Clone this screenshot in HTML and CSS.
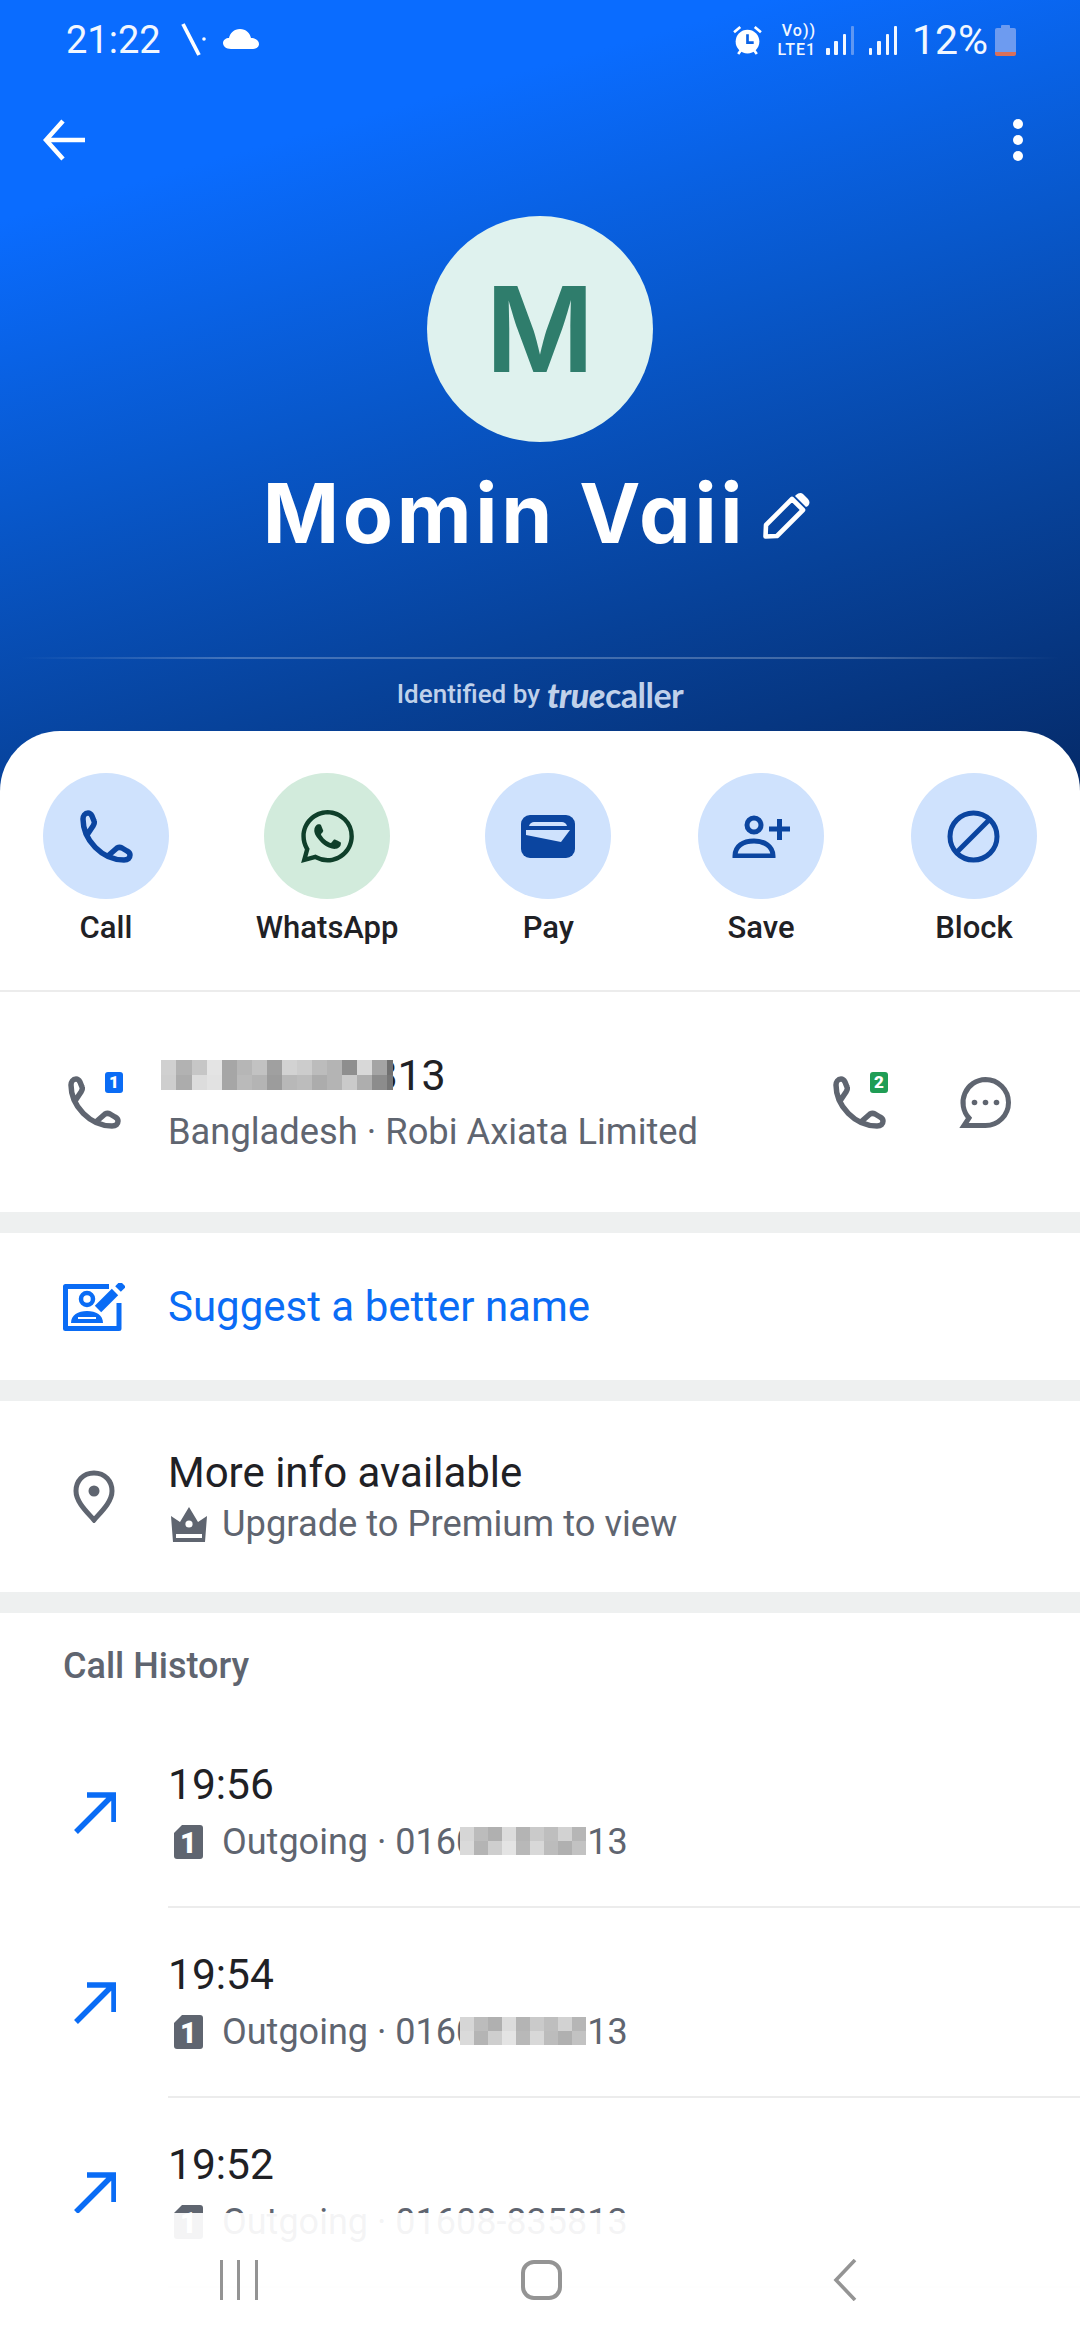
FILE: index.html
```html
<!DOCTYPE html>
<html lang="en">
<head>
<meta charset="utf-8">
<title>Momin Vaii</title>
<link rel="stylesheet" href="styles.css">
</head>
<body>
<svg class="defs" width="0" height="0" aria-hidden="true">
  <symbol id="handset" viewBox="0 0 53 53">
    <path d="M3 9C3 30 22 50 44 50C48 50 50 48 50 45C50 43 49 42 47 41L42 38C40 37 39 37 37 38L29 45M3 9C3 6 5 3 8 3C10 3 11 4 12 6L14 11C15 13 14 14 13 16L7 25" fill="none" stroke="currentColor" stroke-width="5.5" stroke-linejoin="round" stroke-linecap="round"/>
  </symbol>
  <symbol id="out" viewBox="0 0 42 42">
    <path d="M2 40L38 4M13 3H40V30" fill="none" stroke="#0a6cf5" stroke-width="5.500"/>
  </symbol>
  <symbol id="mosaic-a" viewBox="0 0 232 30">
    <rect width="232" height="30" fill="#c4c4c4"/>
    <rect x="0" width="15" height="15" fill="#d0d0d0"/><rect x="15" width="16" height="15" fill="#b2b2b2"/><rect x="31" width="15" height="15" fill="#c6c6c6"/><rect x="46" width="15" height="15" fill="#e4e4e4"/><rect x="61" width="15" height="15" fill="#a6a6a6"/><rect x="76" width="15" height="15" fill="#b6b6b6"/><rect x="91" width="15" height="15" fill="#c2c2c2"/><rect x="106" width="15" height="15" fill="#a0a0a0"/><rect x="121" width="15" height="15" fill="#d2d2d2"/><rect x="136" width="15" height="15" fill="#cccccc"/><rect x="151" width="15" height="15" fill="#bcbcbc"/><rect x="166" width="15" height="15" fill="#b4b4b4"/><rect x="181" width="15" height="15" fill="#8e8e8e"/><rect x="196" width="15" height="15" fill="#d8d8d8"/><rect x="211" width="15" height="15" fill="#a4a4a4"/><rect x="226" width="6" height="15" fill="#707070"/>
    <rect x="0" y="15" width="15" height="15" fill="#cecece"/><rect x="15" y="15" width="16" height="15" fill="#acacac"/><rect x="31" y="15" width="15" height="15" fill="#dcdcdc"/><rect x="46" y="15" width="15" height="15" fill="#e2e2e2"/><rect x="61" y="15" width="15" height="15" fill="#a6a6a6"/><rect x="76" y="15" width="15" height="15" fill="#bababa"/><rect x="91" y="15" width="15" height="15" fill="#b4b4b4"/><rect x="106" y="15" width="15" height="15" fill="#9c9c9c"/><rect x="121" y="15" width="15" height="15" fill="#b8b8b8"/><rect x="136" y="15" width="15" height="15" fill="#bcbcbc"/><rect x="151" y="15" width="15" height="15" fill="#acacac"/><rect x="166" y="15" width="15" height="15" fill="#b4b4b4"/><rect x="181" y="15" width="15" height="15" fill="#cacaca"/><rect x="196" y="15" width="15" height="15" fill="#aeaeae"/><rect x="211" y="15" width="15" height="15" fill="#8c8c8c"/><rect x="226" y="15" width="6" height="15" fill="#767676"/>
  </symbol>
  <symbol id="mosaic-b" viewBox="0 0 126 28">
    <rect width="126" height="28" fill="#c8c8c8"/>
    <rect x="0" width="14" height="14" fill="#d6d6d6"/><rect x="14" width="14" height="14" fill="#bcbcbc"/><rect x="28" width="14" height="14" fill="#b0b0b0"/><rect x="42" width="14" height="14" fill="#dcdcdc"/><rect x="56" width="14" height="14" fill="#b4b4b4"/><rect x="70" width="14" height="14" fill="#cacaca"/><rect x="84" width="14" height="14" fill="#bebebe"/><rect x="98" width="14" height="14" fill="#d2d2d2"/><rect x="112" width="14" height="14" fill="#b6b6b6"/>
    <rect x="0" y="14" width="14" height="14" fill="#dadada"/><rect x="14" y="14" width="14" height="14" fill="#b4b4b4"/><rect x="28" y="14" width="14" height="14" fill="#cecece"/><rect x="42" y="14" width="14" height="14" fill="#e4e4e4"/><rect x="56" y="14" width="14" height="14" fill="#b8b8b8"/><rect x="70" y="14" width="14" height="14" fill="#d8d8d8"/><rect x="84" y="14" width="14" height="14" fill="#bcbcbc"/><rect x="98" y="14" width="14" height="14" fill="#b0b0b0"/><rect x="112" y="14" width="14" height="14" fill="#c2c2c2"/>
  </symbol>
</svg>

<div class="page">
  <header class="hero">
    <div class="status">
      <div class="status-left">
        <span class="clock">21:22</span>
        <svg class="ic-missed" viewBox="0 0 26 34"><path d="M3 1L19 32" stroke="#fff" stroke-width="3.800" fill="none"/><circle cx="24" cy="16" r="1.800" fill="#fff"/></svg>
        <svg class="ic-cloud" viewBox="0 0 36 20"><path d="M8 20C3 20 0 17 0 14C0 11 3 9 6 9C7 4 11 0 17 0C23 0 27 4 28 9C32 9 36 11 36 15C36 18 33 20 30 20Z" fill="#fff"/></svg>
      </div>
      <div class="status-right">
        <svg class="ic-alarm" viewBox="0 0 28 30"><path d="M1 7L7 2M27 7L21 2M5 28L8 24M23 28L20 24" stroke="#fff" stroke-width="2.600" fill="none"/><circle cx="14" cy="16" r="11.500" fill="#fff"/><path d="M14 9V17H20" stroke="#0a62e6" stroke-width="2.600" fill="none"/></svg>
        <div class="volte"><span class="volte-line">Vo))</span><span class="volte-line">LTE1</span></div>
        <div class="signal"><i class="b1"></i><i class="b2"></i><i class="b3"></i><i class="b4 dim"></i></div>
        <div class="signal"><i class="b1"></i><i class="b2"></i><i class="b3"></i><i class="b4"></i></div>
        <span class="pct">12%</span>
        <div class="battery"><span class="battery-cap"></span><span class="battery-body"></span></div>
      </div>
    </div>

    <nav class="topnav">
      <svg class="ic-back" viewBox="0 0 42 42"><path d="M42 21H4M20 2L3 21L20 40" stroke="#fff" stroke-width="4.500" fill="none"/></svg>
      <div class="dots"><i></i><i></i><i></i></div>
    </nav>

    <div class="avatar">M</div>

    <div class="name-row">
      <h1 class="name">Momin Vaii</h1>
      <svg class="ic-pencil" viewBox="0 0 48 48"><path d="M2.500 45.500L3 34L29 8L40 19L14 45Z" fill="none" stroke="#fff" stroke-width="4.600" stroke-linejoin="round"/><path d="M33 4C35 2 38 1 40 3L45 8C47 10 47 13 45 15L43 16L32 5Z" fill="#fff"/></svg>
    </div>

    <div class="hero-line"></div>
    <div class="identified">Identified by <span class="tc"><em>true</em>caller</span></div>
  </header>

  <main class="sheet">
    <section class="actions">
      <div class="action">
        <div class="action-circle"><svg class="ic-53 navy"><use href="#handset"/></svg></div>
        <span>Call</span>
      </div>
      <div class="action">
        <div class="action-circle green">
          <svg class="ic-53" viewBox="0 0 24 24"><path fill="#0f3f2a" d="M17.472 14.382c-.297-.149-1.758-.867-2.03-.967-.273-.099-.471-.148-.67.15-.197.297-.767.966-.94 1.164-.173.199-.347.223-.644.075-.297-.15-1.255-.463-2.39-1.475-.883-.788-1.48-1.761-1.653-2.059-.173-.297-.018-.458.13-.606.134-.133.298-.347.446-.52.149-.174.198-.298.298-.497.099-.198.05-.371-.025-.52-.075-.149-.669-1.612-.916-2.207-.242-.579-.487-.5-.669-.51-.173-.008-.371-.01-.57-.01-.198 0-.52.074-.792.372-.272.297-1.04 1.016-1.04 2.479 0 1.462 1.065 2.875 1.213 3.074.149.198 2.096 3.2 5.077 4.487.709.306 1.262.489 1.694.625.712.227 1.36.195 1.871.118.571-.085 1.758-.719 2.006-1.413.248-.694.248-1.289.173-1.413-.074-.124-.272-.198-.57-.347m-5.421 7.403h-.004a9.87 9.87 0 01-5.031-1.378l-.361-.214-3.741.982.998-3.648-.235-.374a9.86 9.86 0 01-1.51-5.26c.001-5.45 4.436-9.884 9.888-9.884 2.64 0 5.122 1.03 6.988 2.898a9.825 9.825 0 012.893 6.994c-.003 5.45-4.437 9.884-9.885 9.884m8.413-18.297A11.815 11.815 0 0012.05 0C5.495 0 .16 5.335.157 11.892c0 2.096.547 4.142 1.588 5.945L.057 24l6.305-1.654a11.882 11.882 0 005.683 1.448h.005c6.554 0 11.89-5.335 11.893-11.893a11.821 11.821 0 00-3.48-8.413z"/></svg>
        </div>
        <span>WhatsApp</span>
      </div>
      <div class="action">
        <div class="action-circle"><svg class="ic-pay" viewBox="0 0 54 43"><rect width="54" height="43" rx="9" fill="#0b45a0"/><path d="M8 11C9 8 11 7 13 7H41C43 7 45 8 46 11Z" fill="#cfe2fd"/><path d="M5 15H49L40 27L5 20Z" fill="#cfe2fd"/></svg></div>
        <span>Pay</span>
      </div>
      <div class="action">
        <div class="action-circle"><svg class="ic-save" viewBox="0 0 60 43"><circle cx="23" cy="10" r="7" fill="none" stroke="#0b45a0" stroke-width="5"/><path d="M4 41C4 31 12 26 23 26C33 26 42 31 42 41Z" fill="none" stroke="#0b45a0" stroke-width="5"/><path d="M38 14H59M48.500 4V25" stroke="#0b45a0" stroke-width="5" fill="none"/></svg></div>
        <span>Save</span>
      </div>
      <div class="action">
        <div class="action-circle"><svg class="ic-53" viewBox="0 0 53 53"><circle cx="26.500" cy="26.500" r="23.500" fill="none" stroke="#0b45a0" stroke-width="5"/><path d="M42 10L10 42" stroke="#0b45a0" stroke-width="5"/></svg></div>
        <span>Block</span>
      </div>
    </section>

    <section class="row row-phone">
      <div class="lead">
        <div class="phone-wrap">
          <svg class="ic-53 gray"><use href="#handset"/></svg>
          <span class="badge blue">1</span>
        </div>
      </div>
      <div class="body">
        <div class="title num"><span class="masked">01608-835813<svg class="mosaic-a"><use href="#mosaic-a"/></svg></span></div>
        <div class="sub">Bangladesh · Robi Axiata Limited</div>
      </div>
      <div class="trail">
        <div class="phone-wrap">
          <svg class="ic-53 gray"><use href="#handset"/></svg>
          <span class="badge green">2</span>
        </div>
        <svg class="ic-53" viewBox="0 0 53 53"><path d="M26.500 3.500A23 23 0 1 1 26.500 49.500H5L10 42A23 23 0 0 1 26.500 3.500Z" fill="none" stroke="#5f6570" stroke-width="5"/><circle cx="15.500" cy="26.500" r="2.800" fill="#5f6570"/><circle cx="26.500" cy="26.500" r="2.800" fill="#5f6570"/><circle cx="37.500" cy="26.500" r="2.800" fill="#5f6570"/></svg>
      </div>
    </section>

    <div class="band"></div>

    <section class="row row-suggest">
      <div class="lead">
        <svg class="ic-suggest" viewBox="0 0 62 48"><path d="M46 3.500H2.500V45.500H56V20" fill="none" stroke="#0a6cf5" stroke-width="5" stroke-linejoin="round"/><circle cx="24" cy="16" r="6" fill="none" stroke="#0a6cf5" stroke-width="4.500"/><path d="M8 40C8 32 15 28 24 28C33 28 40 32 40 40Z" fill="#0a6cf5"/><path d="M15 35H33" stroke="#fff" stroke-width="2"/><path d="M35 26L52 9" stroke="#0a6cf5" stroke-width="9"/><path d="M55 6L60 1" stroke="#0a6cf5" stroke-width="8"/></svg>
      </div>
      <div class="body"><div class="title link">Suggest a better name</div></div>
    </section>

    <div class="band"></div>

    <section class="row row-more">
      <div class="lead">
        <svg class="ic-pin" viewBox="0 0 42 53"><path d="M21 3C10 3 3 11 3 21C3 32 14 42 21 50C28 42 39 32 39 21C39 11 32 3 21 3Z" fill="none" stroke="#5f6570" stroke-width="5"/><circle cx="21" cy="21" r="5.500" fill="#5f6570"/></svg>
      </div>
      <div class="body body-more">
        <div class="title tight">More info available</div>
        <div class="sub with-icon">
          <svg class="ic-crown" viewBox="0 0 36 35"><path d="M0 9L9 15L18 0L27 15L36 9L34 35H2Z" fill="#5f6570"/><circle cx="18" cy="17" r="3.600" fill="#fff"/><rect x="5" y="27" width="26" height="4" fill="#fff"/></svg>
          Upgrade to Premium to view
        </div>
      </div>
    </section>

    <div class="band"></div>

    <div class="history-head">Call History</div>

    <section class="call">
      <div class="lead"><svg class="ic-out"><use href="#out"/></svg></div>
      <div class="call-body">
        <div class="title time">19:56</div>
        <div class="sub with-icon"><span class="sim">1</span><span class="masked">Outgoing · 01608-835813<svg class="mosaic-b"><use href="#mosaic-b"/></svg></span></div>
      </div>
    </section>
    <section class="call">
      <div class="lead"><svg class="ic-out"><use href="#out"/></svg></div>
      <div class="call-body">
        <div class="title time">19:54</div>
        <div class="sub with-icon"><span class="sim">1</span><span class="masked">Outgoing · 01608-835813<svg class="mosaic-b"><use href="#mosaic-b"/></svg></span></div>
      </div>
    </section>
    <section class="call">
      <div class="lead"><svg class="ic-out"><use href="#out"/></svg></div>
      <div class="call-body">
        <div class="title time">19:52</div>
        <div class="sub with-icon"><span class="sim">1</span><span>Outgoing · 01608-835813</span></div>
      </div>
    </section>
  </main>

  <footer class="softnav">
    <div class="slot">
      <div class="recents"><i></i><i></i><i></i></div>
    </div>
    <div class="slot"><span class="home"></span></div>
    <div class="slot">
      <svg class="ic-navback" viewBox="0 0 24 42"><path d="M22 1L3 21L22 41" fill="none" stroke="#949494" stroke-width="3.600"/></svg>
    </div>
  </footer>
</div>
</body>
</html>
```

FILE: styles.css
```css
* { box-sizing: border-box; }
html, body { margin: 0; padding: 0; background: #fff; }
body { font-family: Roboto, "Liberation Sans", sans-serif; color: #1f2125; }
.defs { position: absolute; }
.page { position: relative; width: 1080px; height: 2340px; overflow: hidden; background: #fff; }

/* Hero */
.hero {
  height: 791px;
  color: #fff;
  background: linear-gradient(164deg, #0a6cff 0%, #0a6cff 20%, #0858cc 46%, #07429a 72%, #052a68 100%);
}
.status { height: 80px; padding: 0 64px 0 66px; display: flex; justify-content: space-between; align-items: center; }
.status-left, .status-right { display: flex; align-items: center; }
.clock { font-size: 38px; line-height: 40px; color: #f2f7ff; }
.pct { font-size: 41px; line-height: 40px; color: #f2f7ff; }
.ic-missed { width: 26px; height: 34px; margin-left: 19px; }
.ic-cloud { width: 36px; height: 20px; margin-left: 17px; margin-top: -2px; }
.ic-alarm { width: 29px; height: 31px; margin-right: 14px; }
.volte { width: 40px; display: flex; flex-direction: column; align-items: flex-end; font-size: 16px; font-weight: 500; color: #f2f7ff; margin-right: 10px; }
.volte-line { display: block; height: 19px; line-height: 19px; letter-spacing: 1px; }
.signal { display: flex; align-items: flex-end; gap: 4.800px; height: 30px; margin-right: 14.500px; }
.signal i { display: block; width: 3.500px; background: #f2f7ff; border-radius: 1px; }
.signal .b1 { height: 7px; }
.signal .b2 { height: 14px; }
.signal .b3 { height: 21px; }
.signal .b4 { height: 29px; }
.signal .dim { background: #5f97f2; }
.battery { display: flex; flex-direction: column; align-items: center; width: 21px; margin-left: 7px; }
.battery-cap { width: 9px; height: 3px; background: #6d9bf0; border-radius: 1px 1px 0 0; }
.battery-body { width: 21px; height: 28px; background: linear-gradient(#6d9bf0 0, #6d9bf0 84%, #d9705a 84%); border-radius: 2px; }

.topnav { height: 120px; padding: 0 57px 0 43px; display: flex; justify-content: space-between; align-items: center; }
.ic-back { width: 42px; height: 42px; }
.dots { display: flex; flex-direction: column; gap: 6px; }
.dots i { display: block; width: 10px; height: 10px; border-radius: 50%; background: #fff; }

.avatar {
  width: 226px; height: 226px; margin: 16px auto 0; border-radius: 50%;
  background: #dff2ee; color: #2f7d6c;
  display: flex; align-items: center; justify-content: center;
  font-family: Inter, "Open Sans", sans-serif; font-weight: 600; font-size: 118px; line-height: 1;
}
.name-row { display: flex; justify-content: center; align-items: center; gap: 17px; margin-top: 22px; height: 100px; padding-right: 6px; }
.name {
  margin: 0; font-family: Inter, "Open Sans", sans-serif; font-weight: 700; font-size: 82px; line-height: 100px;
  letter-spacing: 3.700px; font-feature-settings: "cv11" 1;
}
.ic-pencil { width: 48px; height: 48px; margin-top: 2px; }
.hero-line { height: 2px; margin: 93px 20px 0; background: linear-gradient(90deg, rgba(255,255,255,0), rgba(255,255,255,.24) 20%, rgba(255,255,255,.24) 80%, rgba(255,255,255,0)); }
.identified { margin-top: 17px; height: 36px; display: flex; justify-content: center; align-items: center; gap: 7px; font-size: 26px; font-weight: 500; color: #c0d1ea; }
.tc { font-size: 34px; font-weight: 700; letter-spacing: -.5px; font-family: Lato, Roboto, sans-serif; }
.tc em { font-style: italic; font-weight: 900; font-family: Lato, serif; }

/* Sheet */
.sheet { position: relative; margin-top: -60px; background: #fff; border-radius: 60px 60px 0 0; }
.actions { display: flex; justify-content: space-between; padding: 42px 43px 0; height: 261px; border-bottom: 2px solid #ececec; }
.action { display: flex; flex-direction: column; align-items: center; gap: 11px; min-width: 126px; font-size: 31px; font-weight: 500; line-height: 36px; color: #1f2125; }
.action-circle { width: 126px; height: 126px; border-radius: 50%; background: #cfe2fd; display: flex; align-items: center; justify-content: center; }
.action-circle.green { background: #d2ebdc; }
.ic-53 { width: 53px; height: 53px; display: block; flex: none; }
.navy { color: #0b45a0; }
.gray { color: #5f6570; }
.ic-pay { width: 54px; height: 43px; }
.ic-save { width: 60px; height: 43px; margin-left: -1px; }

.row { display: flex; align-items: center; }
.row-phone { height: 220px; }
.row-suggest { height: 147px; }
.row-more { height: 191px; }
.lead { width: 168px; flex: none; display: flex; align-items: center; }
.phone-wrap { position: relative; width: 53px; height: 53px; }
.lead > .phone-wrap { margin-left: 68px; }
.body { flex: 1; }
.body-more { padding-top: 2px; }
.trail { display: flex; align-items: center; gap: 73px; margin-right: 68px; }
.badge { position: absolute; top: -4px; right: -2px; width: 18px; height: 21px; border-radius: 3px; color: #fff; font-size: 17px; font-weight: 900; line-height: 21px; text-align: center; }
.badge.blue { background: #0a6cf5; }
.badge.green { background: #1f9d55; }

.title { font-size: 42px; line-height: 48px; color: #1f2125; }
.title.num { font-size: 43px; }
.title.time { font-size: 42.500px; }
.title.link { color: #0a6cf5; }
.sub { font-size: 36.300px; line-height: 44px; color: #5f6570; margin-top: 11px; }
.call .sub { font-size: 36px; }
.title.tight + .sub { margin-top: 5px; }
.with-icon { display: flex; align-items: center; gap: 15px; padding-left: 3px; white-space: nowrap; }
.ic-crown { width: 36px; height: 35px; }
.masked { position: relative; display: inline-block; }
.mosaic-a { position: absolute; right: 53px; top: 9px; width: 232px; height: 30px; }
.mosaic-b { position: absolute; right: 42px; top: 7px; width: 126px; height: 28px; }
.ic-suggest { width: 62px; height: 48px; margin-left: 63px; }
.ic-pin { width: 42px; height: 53px; margin-left: 73px; }

.band { height: 21px; background: #eef0f0; }
.history-head { height: 105px; padding: 0 0 0 63px; display: flex; align-items: center; font-size: 36px; font-weight: 500; color: #5f6570; }

.call { display: flex; align-items: center; }
.ic-out { width: 42px; height: 42px; margin-left: 74px; }
.call-body { flex: 1; padding: 43px 0 42px; border-bottom: 2px solid #ececec; }
.sim {
  flex: none; width: 29px; height: 34px; margin: 0 4px 0 3px; background: #5f6570; color: #fff; border-radius: 3px;
  clip-path: polygon(8px 0, 100% 0, 100% 100%, 0 100%, 0 8px);
  font-size: 29px; font-weight: 900; line-height: 36px; text-align: center;
}

/* Soft nav */
.softnav { position: absolute; left: 0; right: 0; top: 2213px; height: 127px; padding: 47px 0 0 3px; display: flex; justify-content: center; align-items: flex-start; background: rgba(255,255,255,.93); }
.slot { width: 303px; height: 40px; display: flex; justify-content: center; align-items: center; }
.recents { display: flex; gap: 14.500px; }
.recents i { display: block; width: 3px; height: 40px; background: #949494; }
.home { display: block; width: 41px; height: 40px; border: 4px solid #949494; border-radius: 13px; }
.ic-navback { width: 24px; height: 42px; }
```
